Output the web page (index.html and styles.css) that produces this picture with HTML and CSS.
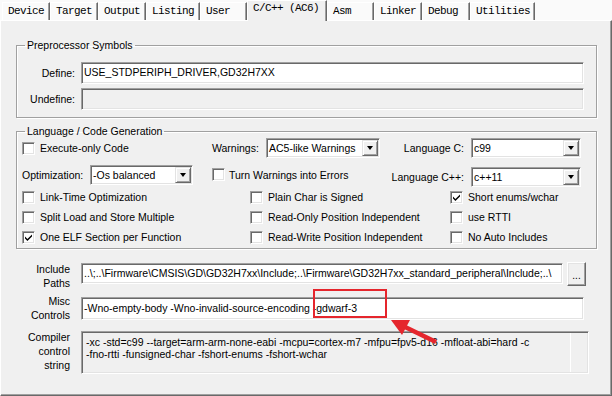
FILE: index.html
```html
<!DOCTYPE html>
<html>
<head>
<meta charset="utf-8">
<link rel="stylesheet" href="styles.css">
</head>
<body>
<div class="window">
  <div class="tabs">
    <div class="tab w48">Device</div>
    <div class="tab w48">Target</div>
    <div class="tab w48">Output</div>
    <div class="tab w54">Listing</div>
    <div class="tab w47">User</div>
    <div class="tab active">C/C++ (AC6)</div>
    <div class="tab w47">Asm</div>
    <div class="tab w48">Linker</div>
    <div class="tab w48">Debug</div>
    <div class="tab w65">Utilities</div>
  </div>
  <div class="panel">
    <fieldset class="group pre">
      <legend>Preprocessor Symbols</legend>
      <div class="prow first"><span class="plabel">Define:</span><div class="edit wide">USE_STDPERIPH_DRIVER,GD32H7XX</div></div>
      <div class="prow"><span class="plabel">Undefine:</span><div class="edit wide disabled"></div></div>
    </fieldset>

    <fieldset class="group lang">
      <legend>Language / Code Generation</legend>
      <div class="lrow r1">
        <div class="c1"><span class="cb"></span>Execute-only Code</div>
        <div class="c2"><span class="lab warn">Warnings:</span><div class="combo cw"><span class="ctext">AC5-like Warnings</span><span class="cbtn"></span></div></div>
        <div class="c3"><span class="rlab">Language C:</span><div class="combo cl"><span class="ctext">c99</span><span class="cbtn"></span></div></div>
      </div>
      <div class="lrow r2">
        <div class="c1"><span class="lab opt">Optimization:</span><div class="combo co"><span class="ctext">-Os balanced</span><span class="cbtn"></span></div></div>
        <div class="c2"><span class="cb tight"></span>Turn Warnings into Errors</div>
        <div class="c3 low"><span class="rlab">Language C++:</span><div class="combo cl"><span class="ctext">c++11</span><span class="cbtn"></span></div></div>
      </div>
      <div class="lrow r3">
        <div class="d1"><span class="cb"></span>Link-Time Optimization</div>
        <div class="d2"><span class="cb"></span>Plain Char is Signed</div>
        <div class="d3"><span class="cb checked"><svg viewBox="0 0 9 9" width="9" height="9"><path d="M1 3.6 L3.4 6 L8 1.4 L8 3.4 L3.4 8 L1 5.6 Z" fill="#000"/></svg></span>Short enums/wchar</div>
      </div>
      <div class="lrow r3">
        <div class="d1"><span class="cb"></span>Split Load and Store Multiple</div>
        <div class="d2"><span class="cb"></span>Read-Only Position Independent</div>
        <div class="d3"><span class="cb"></span>use RTTI</div>
      </div>
      <div class="lrow r3">
        <div class="d1"><span class="cb checked"><svg viewBox="0 0 9 9" width="9" height="9"><path d="M1 3.6 L3.4 6 L8 1.4 L8 3.4 L3.4 8 L1 5.6 Z" fill="#000"/></svg></span>One ELF Section per Function</div>
        <div class="d2"><span class="cb"></span>Read-Write Position Independent</div>
        <div class="d3"><span class="cb"></span>No Auto Includes</div>
      </div>
    </fieldset>

    <div class="bottom">
      <div class="brow inc">
        <div class="blabel">Include<br>Paths</div>
        <div class="edit incl">..\;..\Firmware\CMSIS\GD\GD32H7xx\Include;..\Firmware\GD32H7xx_standard_peripheral\Include;..\</div>
        <div class="btn">...</div>
      </div>
      <div class="brow misc">
        <div class="blabel">Misc<br>Controls</div>
        <div class="edit miscedit">-Wno-empty-body -Wno-invalid-source-encoding -gdwarf-3</div>
      </div>
      <div class="brow comp">
        <div class="blabel">Compiler<br>control<br>string</div>
        <div class="compbox">
          <div class="comptext">-xc -std=c99 --target=arm-arm-none-eabi -mcpu=cortex-m7 -mfpu=fpv5-d16 -mfloat-abi=hard -c<br>-fno-rtti -funsigned-char -fshort-enums -fshort-wchar</div>
          <div class="compstrip"></div>
        </div>
      </div>
    </div>
  </div>

  <div class="redbox"></div>
  <svg class="arrow" width="612" height="396" viewBox="0 0 612 396">
    <line x1="436" y1="342" x2="403" y2="326" stroke="#e5262d" stroke-width="4.5"/>
    <polygon points="391,320 410,320 402,335" fill="#e5262d"/>
  </svg>
</div>
</body>
</html>
```

FILE: styles.css
```css
* { box-sizing: border-box; }
html, body { margin: 0; padding: 0; }
body {
  background: #f0f0f0;
  font-family: "Liberation Sans", Arial, sans-serif;
  font-size: 10.5px;
  color: #000;
}
.window {
  position: relative;
  width: 612px;
  height: 396px;
  overflow: hidden;
  background: #f0f0f0;
}

/* tabs */
.tabs {
  display: flex;
  align-items: flex-end;
  height: 20px;
  padding-left: 2px;
  background: #fafafa;
}
.tab {
  height: 18px;
  padding-left: 5px;
  border-top: 1px solid #fff;
  border-left: 1px solid #fff;
  border-right: 1px solid #696969;
  box-shadow: inset -1px 0 0 #a0a0a0;
  background: #fafafa;
  font-family: "Liberation Mono", "DejaVu Sans Mono", monospace;
  font-size: 11px;
  letter-spacing: -0.6px;
  line-height: 16px;
  white-space: nowrap;
}
.w47 { width: 47px; }
.w48 { width: 48px; }
.w54 { width: 54px; }
.w65 { width: 65px; }
.tab.active {
  width: 80px;
  height: 21px;
  margin-bottom: -1px;
  position: relative;
  z-index: 1;
  background: #f0f0f0;
  line-height: 15px;
}

/* panel */
.panel {
  height: 376px;
  border-top: 1px solid #fff;
  border-left: 1px solid #fff;
  border-right: 1px solid #696969;
  border-bottom: 1px solid #696969;
  box-shadow: inset -1px -1px 0 #a0a0a0;
}

.group {
  margin: 0 0 0 15px;
  width: 581px;
  min-width: 0;
  padding: 0;
  border: 1px solid #a0a0a0;
  box-shadow: 1px 1px 0 #fff, inset 1px 1px 0 #fff;
}
.group legend {
  margin-left: 8px;
  padding: 0 2px;
  line-height: 13px;
  height: 13px;
}
.pre { margin-top: 18px; padding-bottom: 7px; }
.lang { margin-top: 7px; padding-bottom: 1px; }

.prow {
  display: flex;
  align-items: center;
  height: 22px;
  margin-top: 4px;
}
.prow.first { margin-top: 10px; }
.plabel {
  width: 58px;
  margin-right: 6px;
  text-align: right;
}

.edit {
  height: 22px;
  background: #fff;
  border: 1px solid;
  border-color: #a0a0a0 #fff #fff #a0a0a0;
  box-shadow: inset 1px 1px 0 #696969, inset -1px -1px 0 #e3e3e3;
  padding-left: 2px;
  line-height: 19px;
  white-space: nowrap;
  overflow: hidden;
}
.edit.wide { width: 503px; }
.edit.disabled { background: #f0f0f0; }

/* language rows */
.lrow { display: flex; align-items: center; }
.r1 { height: 20px; }
.r2 { height: 25px; margin-top: 4px; }
.r3 { height: 20px; }
.c1 { width: 190px; padding-left: 5px; display: flex; align-items: center; }
.c2 { width: 178px; padding-left: 5px; display: flex; align-items: center; }
.c3 { display: flex; align-items: center; }
.c3.low { margin-top: 4px; }
.d1 { width: 233px; padding-left: 5px; display: flex; align-items: center; }
.d2 { width: 200px; display: flex; align-items: center; }
.d3 { display: flex; align-items: center; }

.lab.warn { width: 54px; }
.lab.opt { width: 68px; }
.rlab { width: 79px; text-align: right; margin-right: 7px; }

.cb {
  flex: none;
  width: 13px;
  height: 13px;
  margin-right: 5px;
  background: #fff;
  border: 1px solid;
  border-color: #a0a0a0 #fff #fff #a0a0a0;
  box-shadow: inset 1px 1px 0 #696969, inset -1px -1px 0 #e3e3e3;
  display: flex;
  align-items: center;
  justify-content: center;
}
.cb.tight { margin-right: 4px; }
.cb svg { display: block; }

.combo {
  display: flex;
  height: 20px;
  background: #fff;
  border: 1px solid;
  border-color: #a0a0a0 #fff #fff #a0a0a0;
  box-shadow: inset 1px 1px 0 #696969, inset -1px -1px 0 #e3e3e3;
  padding: 1px;
}
.cw { width: 114px; }
.cl { width: 110px; }
.co { width: 103px; }
.ctext {
  flex: 1;
  padding-left: 1px;
  line-height: 16px;
  white-space: nowrap;
  overflow: hidden;
}
.cbtn {
  position: relative;
  width: 16px;
  height: 16px;
  background: #f0f0f0;
  border: 1px solid;
  border-color: #e3e3e3 #696969 #696969 #e3e3e3;
  box-shadow: inset 1px 1px 0 #fff, inset -1px -1px 0 #a0a0a0;
  display: flex;
  align-items: center;
  justify-content: center;
}
.cbtn::after {
  content: "";
  width: 0;
  height: 0;
  border-left: 3.5px solid transparent;
  border-right: 3.5px solid transparent;
  border-top: 4px solid #000;
}

/* bottom section */
.bottom { margin-top: 13px; }
.brow { display: flex; align-items: flex-start; }
.blabel {
  width: 69px;
  margin-right: 11px;
  text-align: right;
  line-height: 14px;
}
.edit.incl { width: 482px; height: 21px; margin-top: 1px; line-height: 18px; }
.btn {
  width: 19px;
  height: 24px;
  margin-left: 4px;
  border: 1px solid;
  border-color: #fff #696969 #696969 #fff;
  box-shadow: inset -1px -1px 0 #a0a0a0, inset 1px 1px 0 #e3e3e3;
  background: #f0f0f0;
  text-align: center;
  line-height: 26px;
  font-size: 10px;
}
.brow.misc { margin-top: 4px; }
.edit.miscedit { width: 503px; height: 23px; margin-top: 3px; line-height: 20px; }
.brow.comp { margin-top: 8px; }
.compbox {
  display: flex;
  width: 508px;
  height: 43px;
  margin-top: 1px;
  background: #f0f0f0;
  border: 1px solid;
  border-color: #a0a0a0 #fff #fff #a0a0a0;
  box-shadow: inset 1px 1px 0 #696969, inset -1px -1px 0 #e3e3e3;
  padding: 1px;
}
.comptext {
  flex: 1;
  padding: 3px 0 0 3px;
  line-height: 12px;
  white-space: nowrap;
  overflow: hidden;
}
.compstrip {
  width: 17px;
  border-left: 1px solid #fff;
}

/* annotations */
.redbox {
  position: absolute;
  left: 313px;
  top: 289px;
  width: 74px;
  height: 29px;
  border: 2px solid #e5262d;
}
.arrow {
  position: absolute;
  left: 0;
  top: 0;
  pointer-events: none;
}
```
